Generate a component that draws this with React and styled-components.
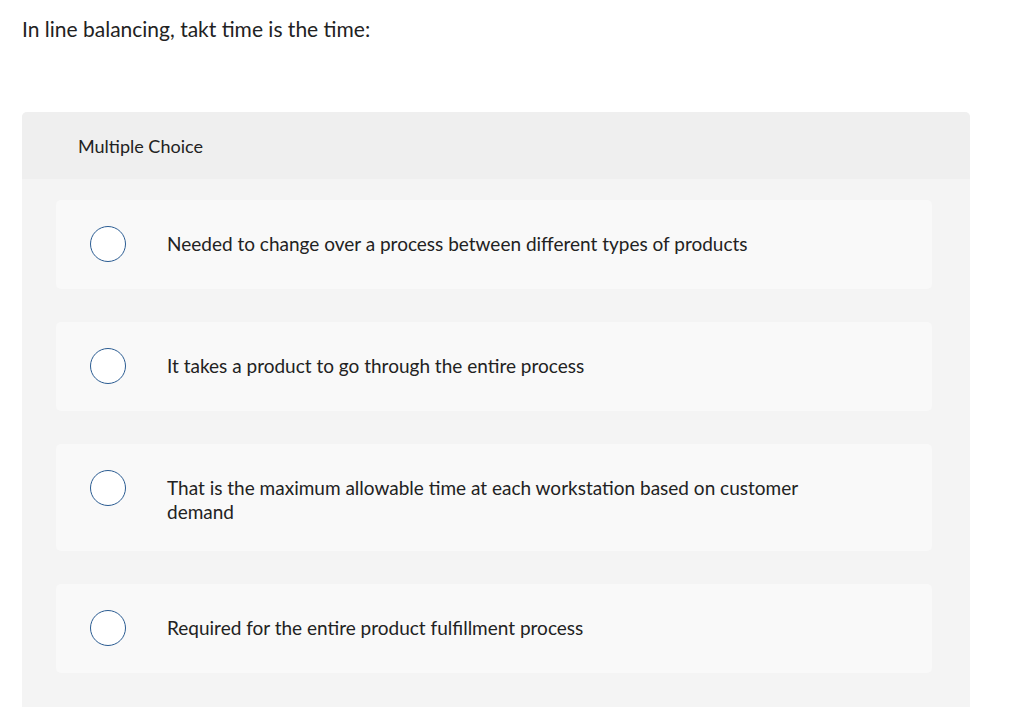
import React from "react";
import styled, { createGlobalStyle } from "styled-components";

const GlobalStyle = createGlobalStyle`
  html, body {
    margin: 0;
    padding: 0;
    background: #ffffff;
  }
  body {
    font-family: Lato, "Liberation Sans", sans-serif;
    color: #222222;
  }
`;

const Page = styled.div`
  padding: 16px 54px 0 22px;
`;

const Question = styled.p`
  margin: 0;
  font-size: 21px;
  line-height: 26px;
  color: #222222;
`;

const Panel = styled.section`
  margin-top: 70px;
  background: #f4f4f4;
  border-radius: 5px 5px 0 0;
  overflow: hidden;
`;

const PanelHeader = styled.div`
  display: flex;
  align-items: center;
  height: 67px;
  padding-left: 56px;
  background: #efefef;
  font-size: 18px;
`;

const Choices = styled.ul`
  list-style: none;
  margin: 0;
  padding: 21px 38px 40px 34px;
  display: flex;
  flex-direction: column;
  gap: 33px;
`;

const Choice = styled.li`
  display: flex;
  align-items: flex-start;
  gap: 41px;
  padding: 26px 34px 27px;
  background: #f9f9f9;
  border-radius: 5px;
`;

const Radio = styled.span`
  flex: none;
  width: 34px;
  height: 34px;
  border: 1.5px solid #2b5c92;
  border-radius: 50%;
  background: #ffffff;
`;

const Label = styled.span`
  padding-top: 6px;
  max-width: 640px;
  font-size: 19px;
  line-height: 24px;
  color: #222222;
`;

const options = [
  "Needed to change over a process between different types of products",
  "It takes a product to go through the entire process",
  "That is the maximum allowable time at each workstation based on customer demand",
  "Required for the entire product fulfillment process",
];

export default function App() {
  return (
    <>
      <GlobalStyle />
      <Page>
        <Question>In line balancing, takt time is the time:</Question>
        <Panel>
          <PanelHeader>Multiple Choice</PanelHeader>
          <Choices>
            {options.map((text) => (
              <Choice key={text}>
                <Radio />
                <Label>{text}</Label>
              </Choice>
            ))}
          </Choices>
        </Panel>
      </Page>
    </>
  );
}
